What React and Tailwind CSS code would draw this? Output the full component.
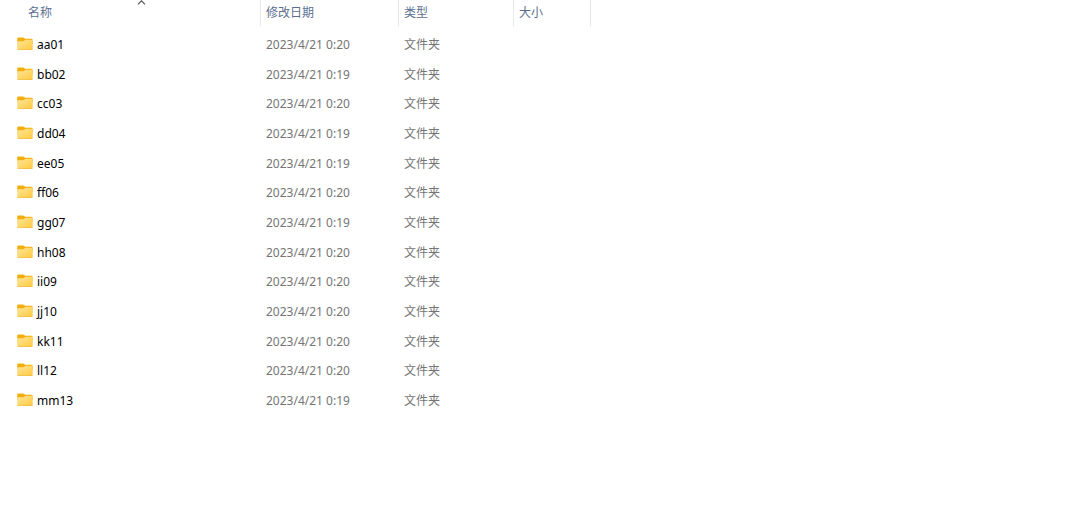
import { useState } from 'react'

const FOLDERS = [
  { name: 'aa01', modified: '2023/4/21 0:20' },
  { name: 'bb02', modified: '2023/4/21 0:19' },
  { name: 'cc03', modified: '2023/4/21 0:20' },
  { name: 'dd04', modified: '2023/4/21 0:19' },
  { name: 'ee05', modified: '2023/4/21 0:19' },
  { name: 'ff06', modified: '2023/4/21 0:20' },
  { name: 'gg07', modified: '2023/4/21 0:19' },
  { name: 'hh08', modified: '2023/4/21 0:20' },
  { name: 'ii09', modified: '2023/4/21 0:20' },
  { name: 'jj10', modified: '2023/4/21 0:20' },
  { name: 'kk11', modified: '2023/4/21 0:20' },
  { name: 'll12', modified: '2023/4/21 0:20' },
  { name: 'mm13', modified: '2023/4/21 0:19' },
]

function FolderIcon() {
  return (
    <svg width="16" height="16" viewBox="0 0 16 16" className="shrink-0" aria-hidden="true">
      <defs>
        <linearGradient id="folder-front" x1="0" y1="0" x2="1" y2="1">
          <stop offset="0" stopColor="#ffe59c" />
          <stop offset="1" stopColor="#ffca3c" />
        </linearGradient>
      </defs>
      <path d="M0.2 1.7Q0.2 0.5 1.4 0.5H6Q6.7 0.5 7.2 1L8.2 1.8H14.4Q15.6 1.8 15.6 3V7H0.2Z" fill="#f3ad0d" />
      <path d="M0.2 4.2H6.2Q6.8 4.2 7.3 3.8L8 3.1Q8.4 2.8 9 2.8H14.5Q15.7 2.8 15.7 4V11.9Q15.7 13.1 14.5 13.1H1.4Q0.2 13.1 0.2 11.9Z" fill="url(#folder-front)" />
      <path d="M0.4 12.4Q0.7 13.1 1.4 13.1H14.4Q15.1 13.1 15.4 12.4Z" fill="#e9b440" />
    </svg>
  )
}

function SortArrow({ ascending }) {
  return (
    <svg
      width="9"
      height="5"
      viewBox="0 0 9 5"
      className={ascending ? 'absolute top-0 right-[114px]' : 'absolute top-0 right-[114px] rotate-180'}
      aria-hidden="true"
    >
      <path d="M1 4.3L4.5 0.8L8 4.3" fill="none" stroke="#5a5a5a" strokeWidth="1.2" />
    </svg>
  )
}

function ColumnHeader({ label }) {
  return (
    <th scope="col" className="p-0 align-top font-normal">
      <div className="flex h-[26px] items-center border-r border-[#e8e8e8] pl-[5px]">{label}</div>
    </th>
  )
}

export default function App() {
  const [ascending, setAscending] = useState(true)
  const rows = ascending ? FOLDERS : [...FOLDERS].reverse()

  return (
    <main className="min-h-screen overflow-x-auto bg-white font-['Noto_Sans','Noto_Sans_CJK_SC',sans-serif] text-xs">
      <table className="h-[416px] table-fixed border-collapse text-left">
        <colgroup>
          <col className="w-[261px]" />
          <col className="w-[138px]" />
          <col className="w-[115px]" />
          <col className="w-[77px]" />
        </colgroup>
        <thead className="text-[#5c6f8f]">
          <tr className="h-[30px]">
            <th scope="col" aria-sort={ascending ? 'ascending' : 'descending'} className="p-0 align-top font-normal">
              <button
                type="button"
                onClick={() => setAscending((a) => !a)}
                className="relative flex h-[26px] w-full items-center border-r border-[#e8e8e8] pl-7"
              >
                名称
                <SortArrow ascending={ascending} />
              </button>
            </th>
            <ColumnHeader label="修改日期" />
            <ColumnHeader label="类型" />
            <ColumnHeader label="大小" />
          </tr>
        </thead>
        <tbody className="text-[#757575]">
          {rows.map((folder) => (
            <tr key={folder.name}>
              <td className="p-0">
                <div className="flex items-center gap-1 pl-[17px] text-black">
                  <FolderIcon />
                  {folder.name}
                </div>
              </td>
              <td className="p-0 pl-[5px]">{folder.modified}</td>
              <td className="p-0 pl-[5px]">文件夹</td>
              <td className="p-0" />
            </tr>
          ))}
        </tbody>
      </table>
    </main>
  )
}
